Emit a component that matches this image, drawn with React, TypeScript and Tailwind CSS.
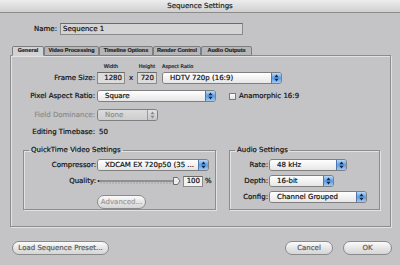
import React from "react";

function Arrows({ disabled }: { disabled?: boolean }) {
  const c = disabled ? "#8a8a8a" : "#14264a";
  return (
    <svg width="5" height="8" viewBox="0 0 5 8">
      <path d="M2.5 0.6 L4.6 3.2 L0.4 3.2 Z" fill={c} />
      <path d="M2.5 7.4 L4.6 4.8 L0.4 4.8 Z" fill={c} />
    </svg>
  );
}

function Popup({ w, text, disabled }: { w: string; text: string; disabled?: boolean }) {
  return (
    <div className={`flex h-[12px] ${w} rounded-[3px] border border-[#7f7f7f] overflow-hidden shrink-0`}>
      <div
        className={`flex-1 flex items-center pl-[7px] text-[7px] leading-none whitespace-nowrap ${
          disabled
            ? "bg-gradient-to-b from-[#dcdcdc] to-[#cdcdcd] text-[#8e8e8e]"
            : "bg-gradient-to-b from-white to-[#e6e6e6] text-[#111]"
        }`}
      >
        {text}
      </div>
      <div
        className={`w-[10px] flex items-center justify-center border-l ${
          disabled
            ? "border-[#9a9a9a] bg-gradient-to-b from-[#e2e2e2] to-[#c6c6c6]"
            : "border-[#4f77ad] bg-gradient-to-b from-[#b9dbf8] via-[#5d9ce4] to-[#9fcbf4]"
        }`}
      >
        <Arrows disabled={disabled} />
      </div>
    </div>
  );
}

function Button({ w, text, disabled }: { w: string; text: string; disabled?: boolean }) {
  return (
    <div
      className={`${w} h-[14px] rounded-full border border-[#8a8a8a] bg-gradient-to-b from-[#fbfbfb] via-[#e6e6e6] to-[#d6d6d6] flex items-center justify-center text-[7px] ${
        disabled ? "text-[#9a9a9a]" : "text-[#5a5a5a]"
      }`}
    >
      {text}
    </div>
  );
}

function Slider() {
  const ticks = [];
  for (let x = 4; x <= 76; x += 3) ticks.push(x);
  return (
    <svg width="84" height="12" viewBox="0 0 84 12">
      <line x1="1" y1="6" x2="80" y2="6" stroke="#5a5a5a" strokeWidth="1" />
      <circle cx="1.5" cy="6" r="1" fill="#333" />
      {ticks.map((x) => (
        <line key={x} x1={x} y1="7.5" x2={x} y2="8.5" stroke="#7a7a7a" strokeWidth="0.8" />
      ))}
      <path d="M76.5 2.5 H80.5 L83 6 L80.5 9.5 H76.5 Z" fill="#ececec" stroke="#555" strokeWidth="0.8" />
    </svg>
  );
}

function Tab({ w, text, selected }: { w: string; text: string; selected?: boolean }) {
  return (
    <div
      className={`${w} h-[10px] border border-[#7e7e7e] rounded-t-[2px] flex items-center justify-center font-['Liberation_Sans',sans-serif] font-bold text-[5.5px] text-[#222] whitespace-nowrap ${
        selected ? "bg-[#d2d2d4] border-b-[#d2d2d4] z-10" : "bg-[#b6b6b8]"
      }`}
    >
      {text}
    </div>
  );
}

export default function App() {
  return (
    <div className="w-[400px] h-[265px] bg-[#c4c4c6] overflow-hidden font-['DejaVu_Sans',sans-serif] text-[7px] leading-none text-[#111] [-webkit-text-stroke:0.2px_currentColor]">
      <div className="h-[13px] border-b border-[#8c8c8c] bg-gradient-to-b from-[#ededed] to-[#d0d0d0] flex items-center justify-center text-[7px] text-[#222]">
        Sequence Settings
      </div>

      <div className="flex items-center mt-[10px] h-[12px]">
        <div className="w-[57px] text-right">Name:</div>
        <div className="ml-[3px] w-[183px] h-[12px] bg-[#d4d4d4] border border-[#8a8a8a] border-t-[#6a6a6a] flex items-center pl-[2px]">
          Sequence 1
        </div>
      </div>

      <div className="flex ml-[12px] mt-[11px] h-[10px] -mb-[1px] relative">
        <Tab w="w-[32px]" text="General" selected />
        <Tab w="w-[55px]" text="Video Processing" />
        <Tab w="w-[54px]" text="Timeline Options" />
        <Tab w="w-[48px]" text="Render Control" />
        <Tab w="w-[51px]" text="Audio Outputs" />
      </div>

      <div className="ml-[10px] w-[381px] h-[172px] border border-[#8c8c8c] shadow-[inset_1px_1px_0_#e2e2e2,1px_1px_0_#e2e2e2]">
        <div className="flex items-center mt-[7px] h-[7px] text-[5px] text-[#222]">
          <div className="w-[86px]" />
          <div className="w-[28px] text-center">Width</div>
          <div className="w-[12px]" />
          <div className="w-[20px] text-center whitespace-nowrap">Height</div>
          <div className="ml-[5px] whitespace-nowrap">Aspect Ratio</div>
        </div>

        <div className="flex items-center mt-[2px] h-[12px]">
          <div className="w-[84px] text-right">Frame Size:</div>
          <div className="ml-[2px] w-[28px] h-[12px] bg-[#dcdcdc] border border-[#8a8a8a] border-t-[#6a6a6a] flex items-center justify-end pr-[2px]">
            1280
          </div>
          <div className="w-[12px] text-center">x</div>
          <div className="w-[20px] h-[12px] bg-[#dcdcdc] border border-[#8a8a8a] border-t-[#6a6a6a] flex items-center justify-end pr-[2px]">
            720
          </div>
          <div className="ml-[5px]">
            <Popup w="w-[120px]" text="HDTV 720p (16:9)" />
          </div>
        </div>

        <div className="flex items-center mt-[6px] h-[12px]">
          <div className="w-[84px] text-right">Pixel Aspect Ratio:</div>
          <div className="ml-[2px]">
            <Popup w="w-[119px]" text="Square" />
          </div>
          <div className="ml-[13px] w-[7px] h-[7px] border border-[#7a7a7a] bg-gradient-to-b from-white to-[#e0e0e0]" />
          <div className="ml-[3px]">Anamorphic 16:9</div>
        </div>

        <div className="flex items-center mt-[7px] h-[12px]">
          <div className="w-[84px] text-right text-[#8c8c8c]">Field Dominance:</div>
          <div className="ml-[2px]">
            <Popup w="w-[61px]" text="None" disabled />
          </div>
        </div>

        <div className="flex items-center mt-[6px] h-[10px]">
          <div className="w-[84px] text-right">Editing Timebase:</div>
          <div className="ml-[4px]">50</div>
        </div>

        <div className="flex ml-[12px] mt-[9px]">
          <fieldset className="w-[193px] h-[64px] border border-[#8c8c8c] shadow-[inset_1px_1px_0_#e2e2e2,1px_1px_0_#e2e2e2]">
            <legend className="ml-[5px] px-[2px] text-[7px] leading-[8px]">QuickTime Video Settings</legend>
            <div className="flex items-center mt-[5px] h-[12px]">
              <div className="w-[72px] text-right">Compressor:</div>
              <div className="ml-[1px]">
                <Popup w="w-[112px]" text="XDCAM EX 720p50 (35 ..." />
              </div>
            </div>
            <div className="flex items-center mt-[4px] h-[12px]">
              <div className="w-[72px] text-right">Quality:</div>
              <div className="ml-[1px] flex items-center">
                <Slider />
              </div>
              <div className="ml-[2px] w-[20px] h-[11px] bg-[#f2f2f2] border border-[#8a8a8a] border-t-[#6a6a6a] flex items-center justify-end pr-[2px]">
                100
              </div>
              <div className="ml-[2px]">%</div>
            </div>
            <div className="flex mt-[8px]">
              <div className="ml-[73px]">
                <Button w="w-[49px]" text="Advanced..." disabled />
              </div>
            </div>
          </fieldset>

          <fieldset className="ml-[13px] w-[151px] h-[64px] border border-[#8c8c8c] shadow-[inset_1px_1px_0_#e2e2e2,1px_1px_0_#e2e2e2]">
            <legend className="ml-[5px] px-[2px] text-[7px] leading-[8px]">Audio Settings</legend>
            <div className="flex items-center mt-[5px] h-[12px]">
              <div className="w-[38px] text-right">Rate:</div>
              <div className="ml-[1px]">
                <Popup w="w-[78px]" text="48 kHz" />
              </div>
            </div>
            <div className="flex items-center mt-[4px] h-[12px]">
              <div className="w-[38px] text-right">Depth:</div>
              <div className="ml-[1px]">
                <Popup w="w-[65px]" text="16-bit" />
              </div>
            </div>
            <div className="flex items-center mt-[4px] h-[12px]">
              <div className="w-[38px] text-right">Config:</div>
              <div className="ml-[1px]">
                <Popup w="w-[98px]" text="Channel Grouped" />
              </div>
            </div>
          </fieldset>
        </div>
      </div>

      <div className="flex items-center mt-[14px] ml-[12px] mr-[8px]">
        <Button w="w-[97px]" text="Load Sequence Preset..." />
        <div className="flex-1" />
        <Button w="w-[48px]" text="Cancel" />
        <div className="ml-[10px]">
          <Button w="w-[49px]" text="OK" />
        </div>
      </div>
    </div>
  );
}
